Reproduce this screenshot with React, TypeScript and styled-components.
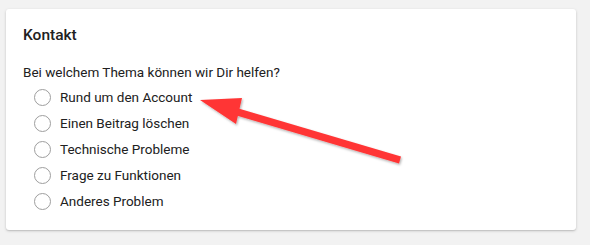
import styled, { createGlobalStyle } from 'styled-components'

const GlobalStyle = createGlobalStyle`
  html, body {
    margin: 0;
    padding: 0;
    background: #f2f2f2;
  }
  body {
    font-family: Roboto, 'Liberation Sans', sans-serif;
    color: #212121;
  }
`

const Page = styled.div`
  position: relative;
  width: 590px;
  height: 245px;
  box-sizing: border-box;
  padding: 9px 14px 15px 6px;
`

const Card = styled.section`
  box-sizing: border-box;
  height: 221px;
  background: #fff;
  border-radius: 3px;
  box-shadow: 0 1px 3px rgba(0, 0, 0, 0.18), 0 1px 1px rgba(0, 0, 0, 0.08);
  padding: 16px 17px;
`

const Title = styled.h2`
  margin: 0;
  font-size: 15.5px;
  line-height: 20px;
  font-weight: 500;
`

const Question = styled.p`
  margin: 17px 0 2px;
  font-size: 13.5px;
  line-height: 20px;
`

const Options = styled.div`
  display: flex;
  flex-direction: column;
  padding-left: 11px;
`

const Option = styled.label`
  display: flex;
  align-items: center;
  gap: 9px;
  height: 26px;
  font-size: 13.5px;
  cursor: pointer;
`

const Radio = styled.input.attrs({ type: 'radio' })`
  appearance: none;
  margin: 0;
  width: 17px;
  height: 17px;
  border: 1.5px solid #9e9e9e;
  border-radius: 50%;
  box-sizing: border-box;
  background: #fff;
`

const Overlay = styled.svg`
  position: absolute;
  left: 0;
  top: 0;
  pointer-events: none;
`

const topics = [
  'Rund um den Account',
  'Einen Beitrag löschen',
  'Technische Probleme',
  'Frage zu Funktionen',
  'Anderes Problem',
]

export default function App() {
  return (
    <>
      <GlobalStyle />
      <Page>
        <Card>
          <Title>Kontakt</Title>
          <Question>Bei welchem Thema können wir Dir helfen?</Question>
          <Options>
            {topics.map((t) => (
              <Option key={t}>
                <Radio name="topic" />
                {t}
              </Option>
            ))}
          </Options>
        </Card>
        <Overlay width="590" height="245" viewBox="0 0 590 245">
          <defs>
            <filter id="sh" x="-10%" y="-10%" width="120%" height="130%">
              <feDropShadow dx="1" dy="1.5" stdDeviation="1" floodColor="#000" floodOpacity="0.3" />
            </filter>
          </defs>
          <g filter="url(#sh)" fill="#ff3636">
            <polygon points="225,104.5 401,156.5 399,163.5 223,111.5" />
            <polygon points="200,100 242,98 236,124" />
          </g>
        </Overlay>
      </Page>
    </>
  )
}
